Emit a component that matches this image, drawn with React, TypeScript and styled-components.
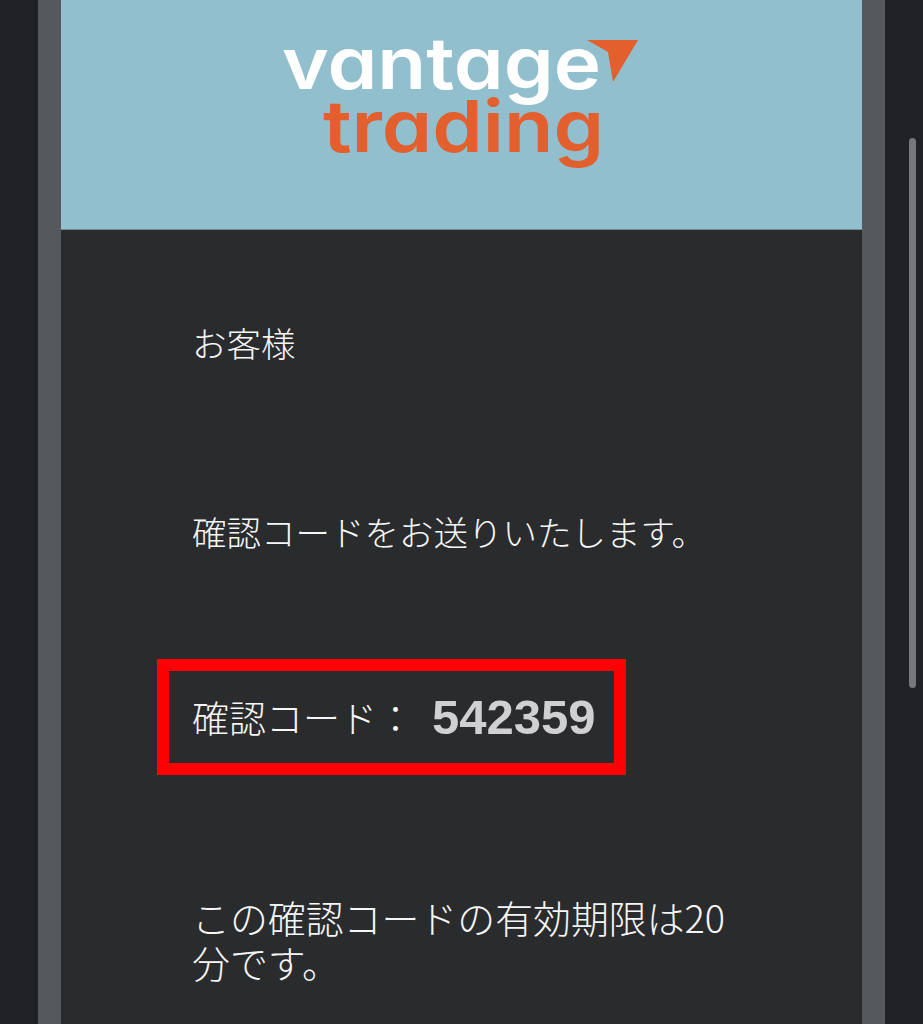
import styled, { createGlobalStyle } from "styled-components"

const GlobalStyle = createGlobalStyle`
  html, body {
    margin: 0;
    height: 100%;
    overflow: hidden;
    background: #202226;
  }
`

const Screen = styled.div`
  height: 1024px;
  overflow: hidden;
  position: relative;
  display: flex;
  justify-content: flex-start;
  padding-left: 38px;
  background: #202226;
  font-family: "Noto Sans CJK JP", "Roboto", sans-serif;
  font-weight: 300;
`

const Frame = styled.div`
  width: 801px;
  padding: 0 23px;
  background: #55585d;
`

const Mail = styled.main`
  background: #2a2b2d;
  height: 1024px;
`

const Banner = styled.header`
  height: 229px;
  background: #91bfce;
  border-bottom: 1px solid #6f8c97;
  display: flex;
  justify-content: center;
`

const Logo = styled.svg`
  display: block;
  width: 801px;
  height: 229px;
`

const LogoWord = styled.text`
  font-family: "Inter", sans-serif;
  font-weight: 600;
  font-size: 72px;
  font-feature-settings: "cv11" 1;
`

const Body = styled.section`
  padding-left: 131px;
  width: 540px;
  color: #f6f6f6;
  font-size: 34.5px;
  line-height: 45px;
`

const Greeting = styled.p`
  margin: 0;
  padding-top: 90px;
`

const Intro = styled.p`
  margin: 144px 0 0;
`

const CodeBox = styled.div`
  display: flex;
  align-items: center;
  box-sizing: border-box;
  width: 469px;
  height: 116px;
  margin: 105px 0 0 -35px;
  padding-left: 23px;
  border: 12px solid #fe0000;
  font-size: 37px;
  white-space: nowrap;
`

const Code = styled.strong`
  margin-left: 18px;
  font-family: "Liberation Sans", sans-serif;
  font-size: 49px;
  font-weight: 700;
  color: #d0d0d3;
`

const Note = styled.p`
  margin: 119px 0 0;
  font-size: 37.9px;
`

const Scrollbar = styled.div`
  position: absolute;
  top: 138px;
  left: 909px;
  width: 7px;
  height: 550px;
  border-radius: 4px;
  background: #77787b;
`

export default function App() {
  return (
    <>
      <GlobalStyle />
      <Screen>
        <Frame>
          <Mail>
            <Banner>
              <Logo viewBox="0 0 801 229" role="img" aria-label="vantage trading">
                <LogoWord x="221" y="89" fill="#ffffff" textLength="319" lengthAdjust="spacingAndGlyphs">
                  vantage
                </LogoWord>
                <LogoWord x="262" y="152" fill="#e35f2e" textLength="281" lengthAdjust="spacingAndGlyphs">
                  trading
                </LogoWord>
                <path d="M526 40 L577 40 L552 82 L547 52 Z" fill="#e35f2e" />
              </Logo>
            </Banner>
            <Body>
              <Greeting>お客様</Greeting>
              <Intro>確認コードをお送りいたします。</Intro>
              <CodeBox>
                確認コード：
                <Code>542359</Code>
              </CodeBox>
              <Note>この確認コードの有効期限は20分です。</Note>
            </Body>
          </Mail>
        </Frame>
        <Scrollbar />
      </Screen>
    </>
  )
}
